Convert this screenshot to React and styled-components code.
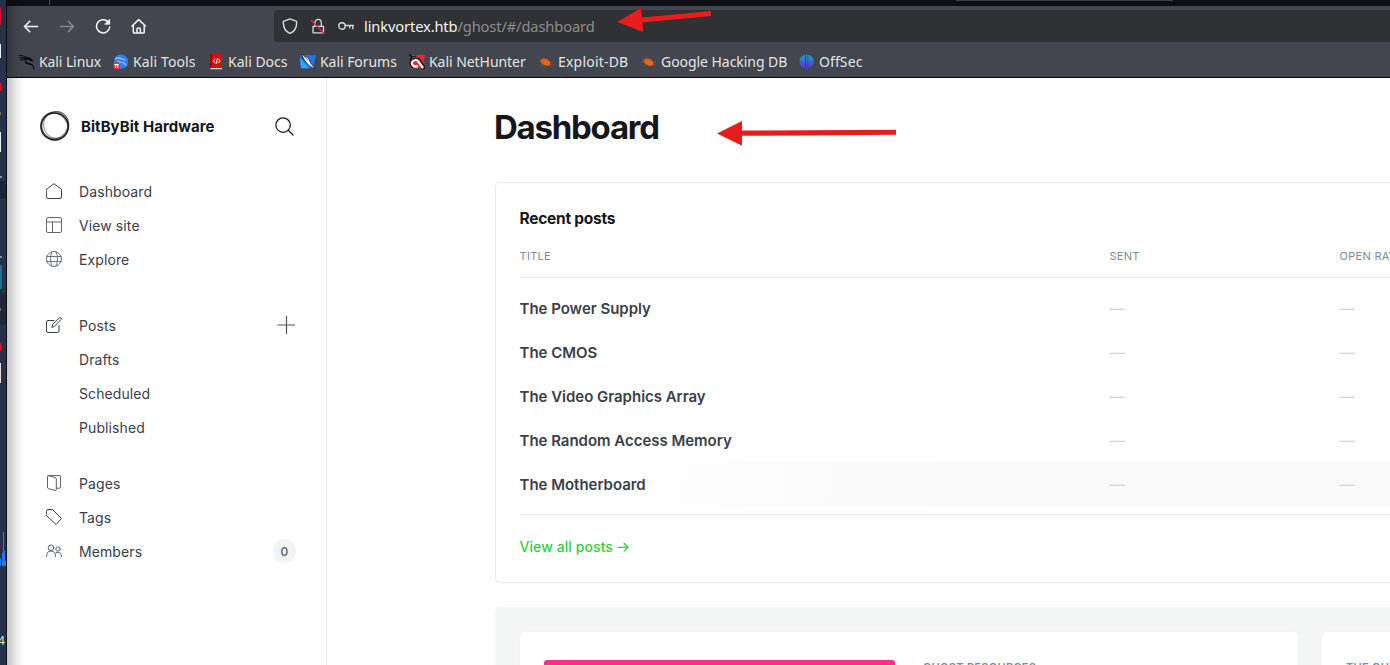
import React from 'react';
import styled, { createGlobalStyle } from 'styled-components';

const Global = createGlobalStyle`
  *, *::before, *::after { box-sizing: border-box; }
  body { margin: 0; background: #fff; overflow: hidden; }
`;

const INTER = 'Inter, "Liberation Sans", sans-serif';
const CHROME = '"Noto Sans", "Open Sans", sans-serif';

const Desktop = styled.div`
  position: relative;
  display: flex;
  width: 1390px;
  height: 665px;
  overflow: hidden;
`;

/* Sliver of the window behind the browser */
const Behind = styled.div`
  position: relative;
  flex: 0 0 7px;
  overflow: hidden;
  background: #27324a;
  border-right: 1px solid #0b0d14;
`;
const Mark = styled.i`
  position: absolute;
  left: 0;
  top: ${p => p.$top}px;
  width: ${p => p.$w}px;
  height: ${p => p.$h}px;
  background: ${p => p.$color};
  border-radius: ${p => (p.$round ? '0 50% 50% 0 / 0 50% 50% 0' : 0)};
`;
const Digit = styled.span`
  position: absolute;
  left: -2px;
  top: 634px;
  font: 12px/14px ${CHROME};
  color: #e3e6c8;
`;

const Browser = styled.div`
  position: relative;
  flex: 1;
  min-width: 0;
  display: flex;
  flex-direction: column;
  &::after {
    content: '';
    position: absolute;
    left: 0;
    top: 6px;
    bottom: 0;
    width: 17px;
    pointer-events: none;
    background: linear-gradient(90deg, rgba(0,0,0,.22), rgba(0,0,0,.15) 30%, rgba(0,0,0,.05) 65%, transparent);
  }
`;
const TabStrip = styled.div`
  display: flex;
  height: 6px;
  background: #0c0e13;
`;
const TabDivider = styled.i`
  width: 1px;
  height: 5px;
  margin-left: 42px;
  background: #4a4c52;
`;
const TabEdge = styled.i`
  width: 217px;
  height: 1px;
  margin-left: 906px;
  background: #3c3e46;
`;
const NavBar = styled.div`
  display: flex;
  height: 40px;
  padding-top: 4px;
  background: #43464e;
`;
const NavButtons = styled.div`
  display: flex;
  align-items: center;
  gap: 20px;
  height: 32px;
  width: 267px;
  padding-left: 16px;
  color: #f6f6f4;
`;
const UrlBar = styled.div`
  flex: 1;
  display: flex;
  align-items: center;
  height: 32px;
  padding-left: 8px;
  border-radius: 4px 0 0 4px;
  background: #303135;
  color: #d8d8d8;
`;
const UrlIcons = styled.div`
  display: flex;
  gap: 12px;
  width: 82px;
`;
const Url = styled.span`
  font: 14.67px/20px ${CHROME};
  letter-spacing: -.12px;
  white-space: nowrap;
  color: #8c8d90;
  b { font-weight: 400; color: #f4f4f4; }
`;
const Bookmarks = styled.div`
  display: flex;
  align-items: center;
  gap: 12px;
  height: 32px;
  padding-left: 12px;
  background: #43464e;
  border-bottom: 1px solid #08080a;
`;
const Bookmark = styled.div`
  display: flex;
  align-items: center;
  gap: 4px;
  font: 14px/20px ${CHROME};
  color: #e4e4e3;
  span { width: ${p => p.$w}px; white-space: nowrap; letter-spacing: ${p => p.$ls}px; }
`;

const Page = styled.div`
  flex: 1;
  min-height: 0;
  display: flex;
  background: #fff;
  font-family: ${INTER};
`;
const Sidebar = styled.nav`
  flex: 0 0 320px;
  padding: 33px 30px 0 33px;
  border-right: 1px solid #e6e7e8;
`;
const Brand = styled.div`
  display: flex;
  align-items: center;
  height: 30px;
  margin-bottom: 33px;
  padding-right: 2px;
`;
const BrandName = styled.strong`
  flex: 1;
  padding: 1px 0 0 11px;
  font-size: 15px;
  font-weight: 700;
  letter-spacing: .04px;
  color: #15171a;
  white-space: nowrap;
`;
const NavGroup = styled.div`
  margin-bottom: ${p => p.$gap}px;
`;
const NavItem = styled.div`
  display: flex;
  align-items: center;
  height: 34px;
  padding-left: ${p => (p.$sub ? 39 : 6)}px;
  gap: 17px;
  font-size: 14px;
  letter-spacing: .1px;
  color: #394047;
  svg { flex: none; }
  span { flex: 1; }
`;
const AddButton = styled.div`
  display: flex;
  padding-right: 1px;
`;
const Count = styled.em`
  display: grid;
  place-items: center;
  width: 23px;
  height: 24px;
  border-radius: 12px;
  background: #f1f3f5;
  font-size: 12px;
  font-style: normal;
  font-weight: 500;
  color: #54606c;
`;

const Main = styled.main`
  flex: 1;
  min-width: 0;
  padding: 29px 0 0 168px;
  overflow: hidden;
`;
const Heading = styled.h1`
  margin: 0 0 34px -1px;
  font-size: 33px;
  line-height: 41px;
  height: 41px;
  font-weight: 700;
  letter-spacing: -1.25px;
  color: #15171a;
`;
const Card = styled.section`
  height: 401px;
  padding: 24px 0 0 23.5px;
  border: 1px solid #eaecee;
  border-right: 0;
  border-radius: 5px 0 0 5px;
`;
const CardTitle = styled.h2`
  margin: 0;
  height: 24px;
  font-size: 15.5px;
  line-height: 23px;
  font-weight: 700;
  letter-spacing: -.25px;
  color: #15171a;
`;
const Grid = styled.div`
  display: grid;
  grid-template-columns: 590px 230px 200px;
  align-items: center;
  white-space: nowrap;
`;
const HeadRow = styled(Grid)`
  height: 47px;
  padding-top: 3px;
  border-bottom: 1px solid #e9ebed;
  font-size: 11px;
  letter-spacing: .3px;
  color: #7c8b9a;
`;
const Rows = styled.div`
  padding: 8px 0;
  border-bottom: 1px solid #e9ebed;
`;
const Row = styled(Grid)`
  height: 44px;
  font-size: 15px;
  color: #ced4d9;
  background: ${p => (p.$hover ? 'linear-gradient(100deg, #fff 12%, #fbfbfb 32%, #f9f9f9 50%)' : 'none')};
  b { font-weight: 600; color: #394047; letter-spacing: -.02px; }
`;
const ViewAll = styled.div`
  display: flex;
  align-items: center;
  gap: 4px;
  padding-top: 22px;
  font-size: 14px;
  line-height: 20px;
  font-weight: 500;
  letter-spacing: .08px;
  color: #30cf43;
`;
const Resources = styled.section`
  display: flex;
  gap: 24px;
  height: 200px;
  margin-top: 24px;
  padding: 25px 0 0 25px;
  border-radius: 5px 0 0 0;
  background: #f4f6f6;
`;
const Tile = styled.div`
  flex: 0 0 ${p => p.$w}px;
  display: flex;
  gap: 28px;
  padding: 28px 24px 0;
  border-radius: 5px;
  background: #fff;
  box-shadow: 0 0 2px rgba(0,0,0,.04);
`;
const Banner = styled.div`
  width: 351px;
  border-radius: 3px 3px 0 0;
  background: #ff2d8f;
`;
const Overline = styled.div`
  font-size: 11px;
  line-height: 14px;
  font-weight: 600;
  letter-spacing: .3px;
  color: #7c8b9a;
  white-space: nowrap;
`;
const Overlay = styled.svg`
  position: absolute;
  left: 0;
  top: 0;
  pointer-events: none;
`;

const Svg = ({ size = 16, box = 16, sw = 1, children, ...r }) => (
  <svg width={size} height={size} viewBox={`0 0 ${box} ${box}`} fill="none" stroke="currentColor" strokeWidth={sw} strokeLinecap="round" strokeLinejoin="round" {...r}>{children}</svg>
);

const Back = () => <Svg sw={1.5}><path d="M14.500 8.500H1.500M6.800 3.300 1.500 8.500l5.300 5.200" /></Svg>;
const Forward = () => <Svg sw={1.5} opacity=".38"><path d="M1.500 8.500h13M9.200 3.300l5.300 5.200-5.300 5.200" /></Svg>;
const Reload = () => <Svg sw={1.5}><path d="M12.800 3.600A6.600 6.600 0 1 0 14.700 9" /><path d="M14.700 1.500v4.700H10z" fill="currentColor" strokeWidth=".8" /></Svg>;
const Home = () => <Svg sw={1.5}><path d="M1 8 7.700 1.600 14.500 8M2.300 7.200v7.100q0 .8.800.8h9.300q.8 0 .8-.8V7.200M6 15v-3.800q0-1.200 1.200-1.200h1q1.200 0 1.200 1.200V15" /></Svg>;
const Shield = () => <Svg sw={1.4}><path d="M8 .8 14.600 3.300C15 9.500 12.500 13.500 8 15.500 3.500 13.500 1 9.500 1.400 3.300z" /></Svg>;
const Lock = () => (
  <Svg sw={1.3}>
    <path d="M3 8.300h10.500v6.500H3zM5 8V4.600a3.100 3.100 0 0 1 6.300 0V8" />
    <path d="M1.500 2.500 14 15.200" stroke="#e22850" strokeWidth="1.400" />
  </Svg>
);
const Key = () => <Svg sw={1.4}><circle cx="4" cy="8" r="3.200" /><path d="M7.300 7.500h8.200M11.700 7.500v2.300M14.800 7.500v3.200" /></Svg>;

const Dragon = () => (
  <Svg stroke="#08090b" sw={1.1}>
    <path d="M.5 1.500q5 0 8 2.500M0 4.200q4-1.200 7.500.5M2 6.300q3-1.500 6.500-1.300l4 1.700M9 5Q4.500 6.500 7 9q3 1.200 5.500 1.500 2.500 1 2.200 4.500" />
    <path d="M8 4l3 .3 2.300 2.400M7 9q3 0 5 1.500" strokeWidth="1.500" />
  </Svg>
);
const Tools = () => (
  <Svg stroke="none">
    <circle cx="8" cy="7.700" r="7.200" fill="#2f7cf6" />
    <path d="M2.500 4.500q4-1.500 6.500.5l3 .8M4.500 6.500q1.500 2 5 2 2.500.5 3.500 3" stroke="#a9cbff" strokeWidth="1.100" />
    <circle cx="3.600" cy="11.800" r="3.600" fill="#ee3038" />
    <path d="M1.800 10.500h3.800M2.700 10.500v3M4.700 10.500v3" stroke="#fff" strokeWidth=".9" />
  </Svg>
);
const Docs = () => (
  <Svg stroke="none">
    <path d="M2.500 0H14v14H2.500z" fill="#d40f10" />
    <path d="M2 1.200q0-1.200 1.200-1.200l.8.300v13.200H2z" fill="#92090b" />
    <path d="M2.300 14H14v1.300H2.800z" fill="#e8dcdc" />
    <path d="M7 5 5.200 7 7 8.800M10.500 5 12.200 7l-1.700 1.800M9.500 4.500 8.200 9.400" stroke="#fff" strokeWidth="1" />
  </Svg>
);
const Forums = () => (
  <Svg stroke="none">
    <path d="M0 1.200h16l-2.700 13H1z" fill="#2074f0" />
    <path d="M0 4l9 10.200H1z" fill="#31a8ff" />
    <path d="M1.500.3 8.500 4l2 5 5 6-6.200-3.300L5 7z" fill="#fff" stroke="#15202c" strokeWidth=".7" />
    <path d="M1.200 2.800 6 8M3.500 1.800l4 4" stroke="#15202c" strokeWidth=".8" />
  </Svg>
);
const NetHunter = () => (
  <Svg stroke="none">
    <path d="M3 1h13l-3 13.200H2z" fill="#ed2730" />
    <path d="M.5.5l2.500 2.500M1 6l2-3 4-1" stroke="#111" strokeWidth="1.200" />
    <path d="M3.500 12Q.8 8 5 6q5-1.200 6 2.500l3.300 5" stroke="#2b1215" strokeWidth="4" />
    <path d="M5 12.300Q1 9 4.500 6.800q4-1.800 5.700 2l3.300 4.500M5 12.300l3 .2" stroke="#fff" strokeWidth="2.300" />
  </Svg>
);
const Bug = () => (
  <Svg stroke="none">
    <ellipse cx="7.500" cy="8.200" rx="5.200" ry="3.200" fill="#f2650f" transform="rotate(25 7.500 8.200)" />
    <path d="M1.500 4.500 5 6M5.500 3l1.500 3M9.500 4.500V7M12 8.500l2.700-.7M12 10.500l2.500.8M1 7.500l4 .5M3 11.800l3-1.500M7 12.800l1.500-1.500" stroke="#a3552a" strokeWidth=".7" />
  </Svg>
);
const OffSec = () => (
  <Svg stroke="none">
    <defs><linearGradient id="os" x1="0" y1="0" x2="0" y2="1"><stop stopColor="#18a0c4" /><stop offset="1" stopColor="#6025e0" /></linearGradient></defs>
    <path d="M6 1v12.800Q.6 13 .6 7.400T6 1zM9.300 1v12.800q5.400-.8 5.400-6.400T9.300 1zM7 .5h1.400v15H7z" fill="url(#os)" />
  </Svg>
);

const Ring = () => (
  <svg width="30" height="30" viewBox="0 0 30 30" fill="none" stroke="#1b1b1b">
    <ellipse cx="14.600" cy="15.500" rx="13.700" ry="13.500" strokeWidth="1.400" />
    <ellipse cx="15.800" cy="14.500" rx="14" ry="12.800" strokeWidth="1.200" opacity=".55" transform="rotate(-55 15 15)" />
    <ellipse cx="14.800" cy="15.600" rx="14.200" ry="12.600" strokeWidth="1.300" opacity=".5" transform="rotate(48 15 15)" />
    <ellipse cx="16.300" cy="14" rx="12.800" ry="13.300" strokeWidth=".8" opacity=".6" />
  </svg>
);
const Search = () => <Svg size={19} box={20} sw={1.3} stroke="#15171a"><circle cx="8.500" cy="8.500" r="7.600" /><path d="m14 14 5 5" /></Svg>;
const House = () => <Svg><path d="M.5 6.300 8 .7l7.500 5.600v7.700q0 1.500-1.500 1.500H2Q.5 15.500.5 14z" /></Svg>;
const Layout = () => <Svg stroke="#626870"><rect x=".5" y=".5" width="15" height="15" rx="1.500" /><path d="M.5 5h15M6.500 5v10.500" /></Svg>;
const Globe = () => <Svg stroke="#626870" sw={0.9}><circle cx="8" cy="8" r="7.500" /><path d="M.8 5.500h14.400M.8 10.500h14.400M6 .8Q2.800 8 6 15.200M10 .8q3.200 7.200 0 14.400" /></Svg>;
const Pen = () => <Svg><path d="M8 3.500H2Q.5 3.500.5 5v9q0 1.500 1.500 1.500h9.500q1.500 0 1.500-1.500V8.500M6 10l.7-2.800L13.300.9q.8-.7 1.600 0 .9.900.1 1.700L8.600 9.200z" /></Svg>;
const PagesIcon = () => <Svg stroke="#59616a"><path d="M1.500 1.200q0-.7.800-.6L9 2.500q1.300.4 1.300 1.500v10.700q0 1-1 .7L2.500 13.700q-1-.3-1-1.200zM2 .6h11q1.500 0 1.500 1.300v10q0 1.300-1.300 1.300h-2.700" /></Svg>;
const TagIcon = () => <Svg><path d="M.5 2Q.5.500 2 .5h4.500l9 9-5.500 6L.5 6.500z" /></Svg>;
const People = () => <Svg stroke="#59616a"><circle cx="5" cy="4.800" r="2.800" /><circle cx="12" cy="6" r="2.200" /><path d="M.5 13.500q0-5.500 4.500-5.500t4.500 5.500M10 9.700q5-2 5.500 3.800" /></Svg>;
const Plus = () => <Svg size={18} box={18} sw={1.2} stroke="#50565d"><path d="M9.500.5v17M.8 9h17" /></Svg>;
const ArrowRight = () => <Svg size={12} box={12} sw={1.3}><path d="M1 6.300h10M7.200 2.500 11 6.300l-3.800 3.800" /></Svg>;

const bookmarks = [
  ['Kali Linux', 62, Dragon, -0.1], ['Kali Tools', 63, Tools, 0.12], ['Kali Docs', 60, Docs, 0], ['Kali Forums', 77, Forums, -0.05],
  ['Kali NetHunter', 97, NetHunter, -0.05], ['Exploit-DB', 71, Bug, 0.2], ['Google Hacking DB', 126, Bug, -0.05], ['OffSec', 44, OffSec, 0.1],
];
const marks = [
  [8, 1, 17, '#d31219'], [44, 1, 14, '#f4f4f4'], [83, 2, 8, '#d31219', 1], [112, 1, 3, '#8a6248'], [132, 1, 20, '#e9ebec'],
  [176, 2, 2, '#8c93a0'], [181, 6, 18, '#1b2336'], [256, 2, 2, '#8c93a0'], [265, 2, 24, '#14758a'], [293, 6, 32, '#1e2638'],
  [308, 1, 3, '#8a6248'], [343, 2, 8, '#e01018', 1], [363, 1, 20, '#eed8d4'],
];
const posts = ['The Power Supply', 'The CMOS', 'The Video Graphics Array', 'The Random Access Memory', 'The Motherboard'];

export default function App() {
  return (
    <Desktop>
      <Global />
      <Behind>
        {marks.map(([t, w, h, c, r]) => <Mark key={t} $top={t} $w={w} $h={h} $color={c} $round={r} />)}
        <Overlay width="6" height="665"><path d="M0 566V558H1V566H2V553H3V532H4V551H5V561H6V566z" fill="#2379f2" /></Overlay>
        <Digit>4</Digit>
      </Behind>
      <Browser>
        <TabStrip><TabDivider /><TabEdge /></TabStrip>
        <NavBar>
          <NavButtons><Back /><Forward /><Reload /><Home /></NavButtons>
          <UrlBar>
            <UrlIcons><Shield /><Lock /><Key /></UrlIcons>
            <Url><b>linkvortex.htb</b>/ghost/#/dashboard</Url>
          </UrlBar>
        </NavBar>
        <Bookmarks>
          {bookmarks.map(([name, w, Icon, ls]) => <Bookmark key={name} $w={w} $ls={ls}><Icon /><span>{name}</span></Bookmark>)}
        </Bookmarks>
        <Page>
          <Sidebar>
            <Brand><Ring /><BrandName>BitByBit Hardware</BrandName><Search /></Brand>
            <NavGroup $gap={32}>
              <NavItem><House /><span>Dashboard</span></NavItem>
              <NavItem><Layout /><span>View site</span></NavItem>
              <NavItem><Globe /><span>Explore</span></NavItem>
            </NavGroup>
            <NavGroup $gap={22}>
              <NavItem><Pen /><span>Posts</span><AddButton><Plus /></AddButton></NavItem>
              <NavItem $sub>Drafts</NavItem>
              <NavItem $sub>Scheduled</NavItem>
              <NavItem $sub>Published</NavItem>
            </NavGroup>
            <NavGroup $gap={0}>
              <NavItem><PagesIcon /><span>Pages</span></NavItem>
              <NavItem><TagIcon /><span>Tags</span></NavItem>
              <NavItem><People /><span>Members</span><Count>0</Count></NavItem>
            </NavGroup>
          </Sidebar>
          <Main>
            <Heading>Dashboard</Heading>
            <Card>
              <CardTitle>Recent posts</CardTitle>
              <HeadRow><span>TITLE</span><span>SENT</span><span>OPEN RATE</span></HeadRow>
              <Rows>
                {posts.map((p, i) => <Row key={p} $hover={i === 4}><b>{p}</b><span>—</span><span>—</span></Row>)}
              </Rows>
              <ViewAll>View all posts <ArrowRight /></ViewAll>
            </Card>
            <Resources>
              <Tile $w={778}><Banner /><Overline>GHOST RESOURCES</Overline></Tile>
              <Tile $w={300}><Overline>THE GHOST NEWSLETTER</Overline></Tile>
            </Resources>
          </Main>
        </Page>
      </Browser>
      <Overlay width="1390" height="160" fill="#e81c1c">
        <path d="M617 22 641 8l1 9.500 69-6.500v5l-68.500 6.500.7 9.500z" />
        <path d="M717 133.500 742 121v9.500l154-.7v5l-154 1v10z" />
      </Overlay>
    </Desktop>
  );
}
